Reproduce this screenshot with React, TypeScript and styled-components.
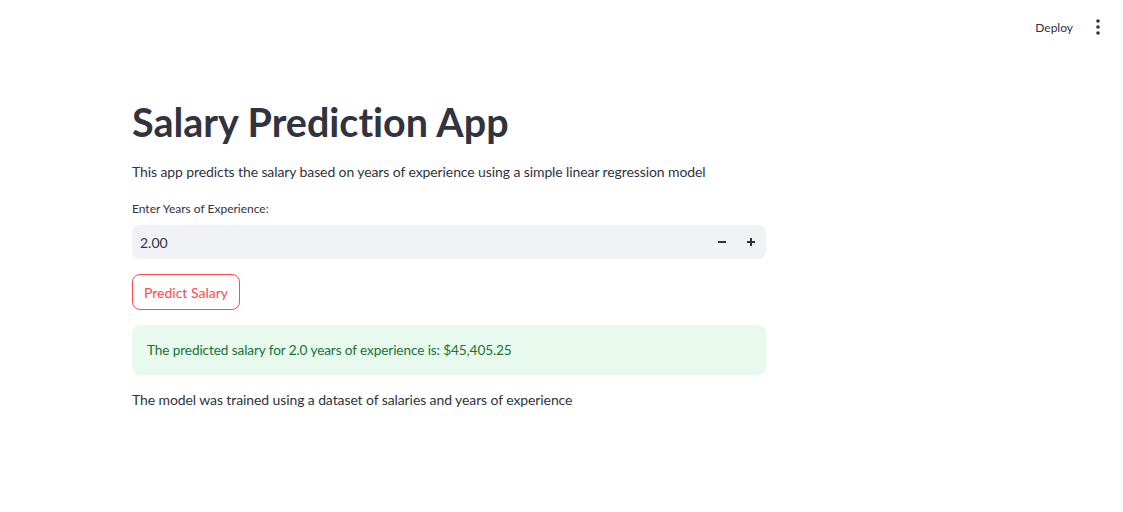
import React from "react";
import styled, { createGlobalStyle } from "styled-components";

const Global = createGlobalStyle`
  html, body { margin: 0; padding: 0; background: #ffffff; }
  body { font-family: "Lato", "Noto Sans", sans-serif; color: rgb(49, 51, 63); }
  * { box-sizing: border-box; }
`;

const Page = styled.div`
  width: 1123px;
  height: 512px;
  display: flex;
  flex-direction: column;
  background: #fff;
`;

const Header = styled.header`
  height: 56px;
  display: flex;
  align-items: center;
  justify-content: flex-end;
  padding-right: 13px;
  gap: 5px;
`;

const DeployButton = styled.button`
  border: none;
  background: transparent;
  font-family: inherit;
  font-size: 12px;
  color: rgb(49, 51, 63);
  padding: 4px 8px;
  margin-top: -2px;
  cursor: pointer;
`;

const MenuButton = styled.button`
  border: none;
  background: transparent;
  width: 24px;
  height: 24px;
  margin-top: -2px;
  display: flex;
  align-items: center;
  justify-content: center;
  padding: 0;
`;

const Main = styled.main`
  width: 634px;
  margin-left: 132px;
  display: flex;
  flex-direction: column;
`;

const Title = styled.h1`
  margin: 40px 0 0;
  font-size: 39.5px;
  line-height: 52px;
  font-weight: 700;
  font-variant-ligatures: none;
  color: rgb(49, 51, 63);
`;

const Paragraph = styled.p<{ $top: number }>`
  margin: ${(p) => p.$top}px 0 0;
  font-size: 14px;
  letter-spacing: -0.1px;
  line-height: 24px;
  color: rgb(49, 51, 63);
`;

const Label = styled.label`
  margin-top: 15px;
  font-size: 12px;
  line-height: 20px;
  color: rgb(49, 51, 63);
`;

const InputRow = styled.div`
  margin-top: 6px;
  height: 34px;
  background: rgb(240, 242, 246);
  border-radius: 8px;
  display: flex;
  align-items: center;
  padding-left: 8px;
  padding-right: 1px;
`;

const NumberValue = styled.input`
  flex: 1;
  border: none;
  background: transparent;
  font-family: inherit;
  font-size: 14px;
  color: rgb(49, 51, 63);
  outline: none;
  padding: 0;
`;

const StepButton = styled.button`
  width: 29px;
  height: 34px;
  border: none;
  background: transparent;
  display: flex;
  align-items: center;
  justify-content: center;
  padding: 0;
`;

const PredictButton = styled.button`
  margin-top: 15px;
  align-self: flex-start;
  height: 36px;
  padding: 0 11px;
  border: 1px solid rgb(255, 75, 75);
  border-radius: 8px;
  background: #fff;
  color: rgb(255, 75, 75);
  font-family: inherit;
  font-size: 14px;
`;

const Alert = styled.div`
  margin-top: 15px;
  height: 50px;
  border-radius: 8px;
  background: rgb(232, 249, 238);
  color: rgb(23, 114, 51);
  display: flex;
  align-items: center;
  padding: 0 15px;
  font-size: 13.6px;
  letter-spacing: -0.1px;
`;

const Minus = () => (
  <svg width="10" height="10" viewBox="0 0 10 10">
    <rect x="1" y="4" width="8" height="2" fill="rgb(49,51,63)" />
  </svg>
);

const Plus = () => (
  <svg width="10" height="10" viewBox="0 0 10 10">
    <rect x="1" y="4" width="8" height="2" fill="rgb(49,51,63)" />
    <rect x="4" y="1" width="2" height="8" fill="rgb(49,51,63)" />
  </svg>
);

const Kebab = () => (
  <svg width="6" height="16" viewBox="0 0 6 16">
    <circle cx="3" cy="2" r="1.8" fill="rgb(49,51,63)" />
    <circle cx="3" cy="8" r="1.8" fill="rgb(49,51,63)" />
    <circle cx="3" cy="14" r="1.8" fill="rgb(49,51,63)" />
  </svg>
);

export default function App() {
  return (
    <Page>
      <Global />
      <Header>
        <DeployButton>Deploy</DeployButton>
        <MenuButton>
          <Kebab />
        </MenuButton>
      </Header>
      <Main>
        <Title>Salary Prediction App</Title>
        <Paragraph $top={12}>
          This app predicts the salary based on years of experience using a simple linear regression model
        </Paragraph>
        <Label>Enter Years of Experience:</Label>
        <InputRow>
          <NumberValue defaultValue="2.00" />
          <StepButton>
            <Minus />
          </StepButton>
          <StepButton>
            <Plus />
          </StepButton>
        </InputRow>
        <PredictButton>Predict Salary</PredictButton>
        <Alert>The predicted salary for 2.0 years of experience is: $45,405.25</Alert>
        <Paragraph $top={13}>The model was trained using a dataset of salaries and years of experience</Paragraph>
      </Main>
    </Page>
  );
}
